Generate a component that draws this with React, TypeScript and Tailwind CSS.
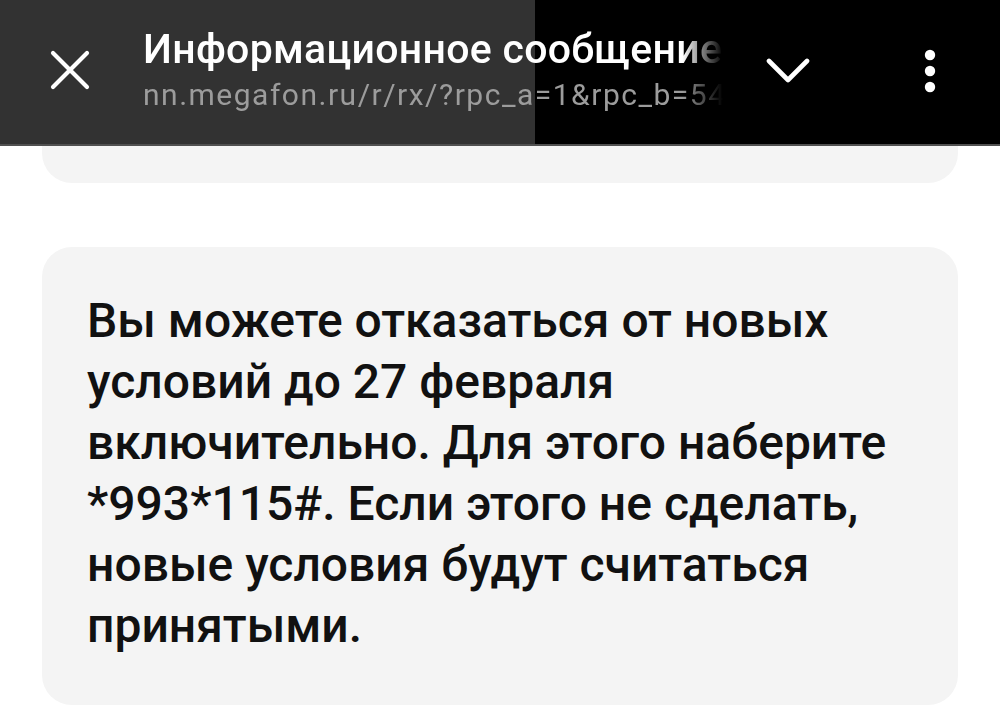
const lines = [
  'Вы можете отказаться от новых',
  'условий до 27 февраля',
  'включительно. Для этого наберите',
  '*993*115#. Если этого не сделать,',
  'новые условия будут считаться',
  'принятыми.',
]

function CloseIcon() {
  return (
    <svg width="40" height="40" viewBox="0 0 40 40" fill="none" aria-hidden="true">
      <path d="M3 3 37 37M37 3 3 37" stroke="white" strokeWidth="4.2" strokeLinecap="round" />
    </svg>
  )
}

function ChevronIcon() {
  return (
    <svg width="44" height="28" viewBox="0 0 44 28" fill="none" aria-hidden="true">
      <path d="M3 4 22 23 41 4" stroke="white" strokeWidth="4.6" strokeLinecap="round" strokeLinejoin="round" />
    </svg>
  )
}

function MenuIcon() {
  return (
    <svg width="12" height="44" viewBox="0 0 12 44" fill="white" aria-hidden="true">
      <circle cx="6" cy="6" r="5.2" />
      <circle cx="6" cy="22" r="5.2" />
      <circle cx="6" cy="38" r="5.2" />
    </svg>
  )
}

export default function App() {
  return (
    <div className="h-[724px] w-[1000px] overflow-hidden bg-white" style={{ fontFamily: 'Roboto, "Noto Sans", sans-serif' }}>
      {/* custom tab toolbar */}
      <header className="relative z-10 flex h-[146px] border-b-2 border-[#505050]">
        <div className="flex w-[535px] shrink-0 bg-[#323232]">
          <div className="flex w-[140px] items-center justify-center pb-[4px]">
            <CloseIcon />
          </div>
        </div>
        <div className="flex flex-1 items-center bg-black">
          <div className="ml-[231px] pb-[2px]">
            <ChevronIcon />
          </div>
          <div className="ml-[114px] pb-[2px]">
            <MenuIcon />
          </div>
        </div>
        <div
          className="absolute left-[143px] top-[25px] w-[580px] overflow-hidden whitespace-nowrap"
          style={{ maskImage: 'linear-gradient(to right, black 93%, transparent 100%)' }}
        >
          <div className="text-[41px] font-medium leading-[48px] tracking-[0.3px] text-white">Информационное сообщение</div>
          <div className="mt-[2px] text-[30px] leading-[40px] tracking-[1.5px] text-[#9c9c9c]">nn.megafon.ru/r/rx/?rpc_a=1&amp;rpc_b=54</div>
        </div>
      </header>

      <main className="-mt-[40px] flex flex-col gap-[64px] px-[42px]">
        <div className="h-[77px] rounded-b-[30px] bg-[#f4f4f4]" />
        <div className="rounded-[30px] bg-[#f4f4f4] pb-[49px] pl-[45px] pr-[20px] pt-[43px]">
          <p className="text-[48px] font-medium leading-[61px] text-[#111111]">
            {lines.map((line) => (
              <span key={line} className="block whitespace-nowrap">
                {line}
              </span>
            ))}
          </p>
        </div>
      </main>
    </div>
  )
}
